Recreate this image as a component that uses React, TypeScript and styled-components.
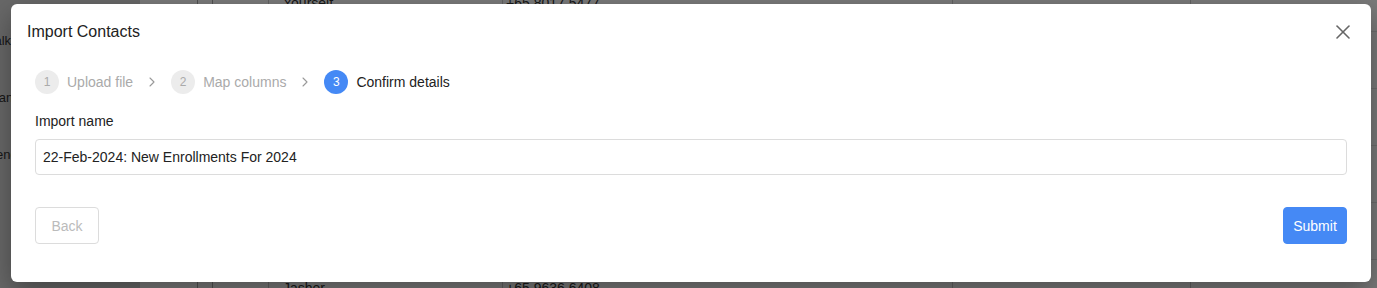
import React from "react";
import styled, { createGlobalStyle } from "styled-components";
import { ChevronRight, X } from "lucide-react";

const GlobalStyle = createGlobalStyle`
  html, body {
    margin: 0;
    padding: 0;
  }
  body {
    font-family: "Liberation Sans", Arial, Helvetica, sans-serif;
    color: #222;
  }
  * {
    box-sizing: border-box;
  }
`;

const Page = styled.div`
  position: relative;
  width: 100%;
  height: 288px;
  overflow: hidden;
  background: #fff;
  display: flex;
`;

/* page behind the dialog */
const Sidebar = styled.div`
  width: 140px;
  flex-shrink: 0;
  background: #d9d9d9;
  padding-top: 12px;
  overflow: hidden;
`;

const SideItem = styled.div`
  height: 57px;
  display: flex;
  align-items: center;
  margin-left: -12px;
  font-size: 13px;
  color: #333;
  white-space: nowrap;
`;

const Table = styled.div`
  flex: 1;
  margin-top: -25px;
`;

const Row = styled.div`
  display: grid;
  grid-template-columns: 57px 15px 56px 234px 450px 238px 1fr;
  height: 57px;
  border-bottom: 1px solid #e4e4e4;
`;

const Cell = styled.div<{ $pad?: number; $first?: boolean }>`
  border-left: ${(p) =>
    p.$first ? "none" : `1px solid ${p.$pad === undefined ? "#aaa" : "#ccc"}`};
  display: flex;
  align-items: center;
  padding-left: ${(p) => p.$pad ?? 0}px;
  font-size: 14px;
  color: #333;
  white-space: nowrap;
  overflow: hidden;
`;

const Backdrop = styled.div`
  position: absolute;
  inset: 0;
  background: rgba(0, 0, 0, 0.52);
`;

/* dialog */
const Modal = styled.div`
  position: absolute;
  left: 11px;
  top: 4px;
  width: 1360px;
  background: #fff;
  border-radius: 6px;
  box-shadow: 0 10px 28px rgba(0, 0, 0, 0.35);
  display: flex;
  flex-direction: column;
`;

const Header = styled.div`
  display: flex;
  align-items: center;
  justify-content: space-between;
  padding: 16px;
`;

const Title = styled.h2`
  margin: 0;
  font-size: 16px;
  line-height: 24px;
  font-weight: 400;
  color: #222;
`;

const CloseButton = styled.button`
  width: 24px;
  height: 24px;
  padding: 0;
  border: none;
  background: none;
  display: flex;
  align-items: center;
  justify-content: center;
  color: #666;
  cursor: pointer;
`;

const Body = styled.div`
  padding: 10px 24px 0;
  display: flex;
  flex-direction: column;
`;

const Steps = styled.div`
  display: flex;
  align-items: center;
  height: 24px;
`;

const Step = styled.div`
  display: flex;
  align-items: center;
  gap: 8px;
`;

const StepNum = styled.span<{ $active?: boolean }>`
  width: 24px;
  height: 24px;
  border-radius: 50%;
  display: flex;
  align-items: center;
  justify-content: center;
  font-size: 12px;
  background: ${(p) => (p.$active ? "#4589f5" : "#ececec")};
  color: ${(p) => (p.$active ? "#fff" : "#aaa")};
`;

const StepLabel = styled.span<{ $active?: boolean }>`
  font-size: 14px;
  color: ${(p) => (p.$active ? "#222" : "#aaa")};
`;

const Sep = styled.span`
  display: flex;
  margin: 0 11px;
  color: #999;
`;

const Label = styled.label`
  margin-top: 17px;
  font-size: 14px;
  line-height: 20px;
  color: #222;
`;

const Input = styled.input`
  margin-top: 8px;
  height: 36px;
  width: 100%;
  border: 1px solid #dcdcdc;
  border-radius: 4px;
  padding: 0 7px;
  font-family: inherit;
  font-size: 14px;
  color: #222;
  outline: none;
`;

const Footer = styled.div`
  display: flex;
  justify-content: space-between;
  padding: 32px 24px 38px;
`;

const Button = styled.button<{ $primary?: boolean }>`
  width: 64px;
  height: 37px;
  border-radius: 4px;
  font-family: inherit;
  font-size: 14px;
  cursor: pointer;
  border: 1px solid ${(p) => (p.$primary ? "#4589f5" : "#dcdcdc")};
  background: ${(p) => (p.$primary ? "#4589f5" : "#fff")};
  color: ${(p) => (p.$primary ? "#fff" : "#bbb")};
`;

const rows = [
  { name: "Yourself", phone: "+65 8017 5477" },
  { name: "", phone: "" },
  { name: "", phone: "" },
  { name: "", phone: "" },
  { name: "", phone: "" },
  { name: "Jasher", phone: "+65 9636 6408" },
];

const steps = ["Upload file", "Map columns", "Confirm details"];

export default function App() {
  return (
    <>
      <GlobalStyle />
      <Page>
        <Sidebar>
          <SideItem>Talk</SideItem>
          <SideItem>Manual</SideItem>
          <SideItem>Vendor</SideItem>
        </Sidebar>
        <Table>
          {rows.map((r, i) => (
            <Row key={i}>
              <Cell $pad={0} $first />
              <Cell />
              <Cell />
              <Cell $pad={14}>{r.name}</Cell>
              <Cell $pad={3}>{r.phone}</Cell>
              <Cell $pad={8} />
              <Cell $pad={8} />
            </Row>
          ))}
        </Table>
        <Backdrop />
        <Modal>
          <Header>
            <Title>Import Contacts</Title>
            <CloseButton aria-label="Close">
              <X size={26} strokeWidth={1.6} />
            </CloseButton>
          </Header>
          <Body>
            <Steps>
              {steps.map((s, i) => {
                const active = i === steps.length - 1;
                return (
                  <React.Fragment key={s}>
                    {i > 0 && (
                      <Sep>
                        <ChevronRight size={16} strokeWidth={1.6} />
                      </Sep>
                    )}
                    <Step>
                      <StepNum $active={active}>{i + 1}</StepNum>
                      <StepLabel $active={active}>{s}</StepLabel>
                    </Step>
                  </React.Fragment>
                );
              })}
            </Steps>
            <Label htmlFor="import-name">Import name</Label>
            <Input
              id="import-name"
              defaultValue="22-Feb-2024: New Enrollments For 2024"
            />
          </Body>
          <Footer>
            <Button>Back</Button>
            <Button $primary>Submit</Button>
          </Footer>
        </Modal>
      </Page>
    </>
  );
}
